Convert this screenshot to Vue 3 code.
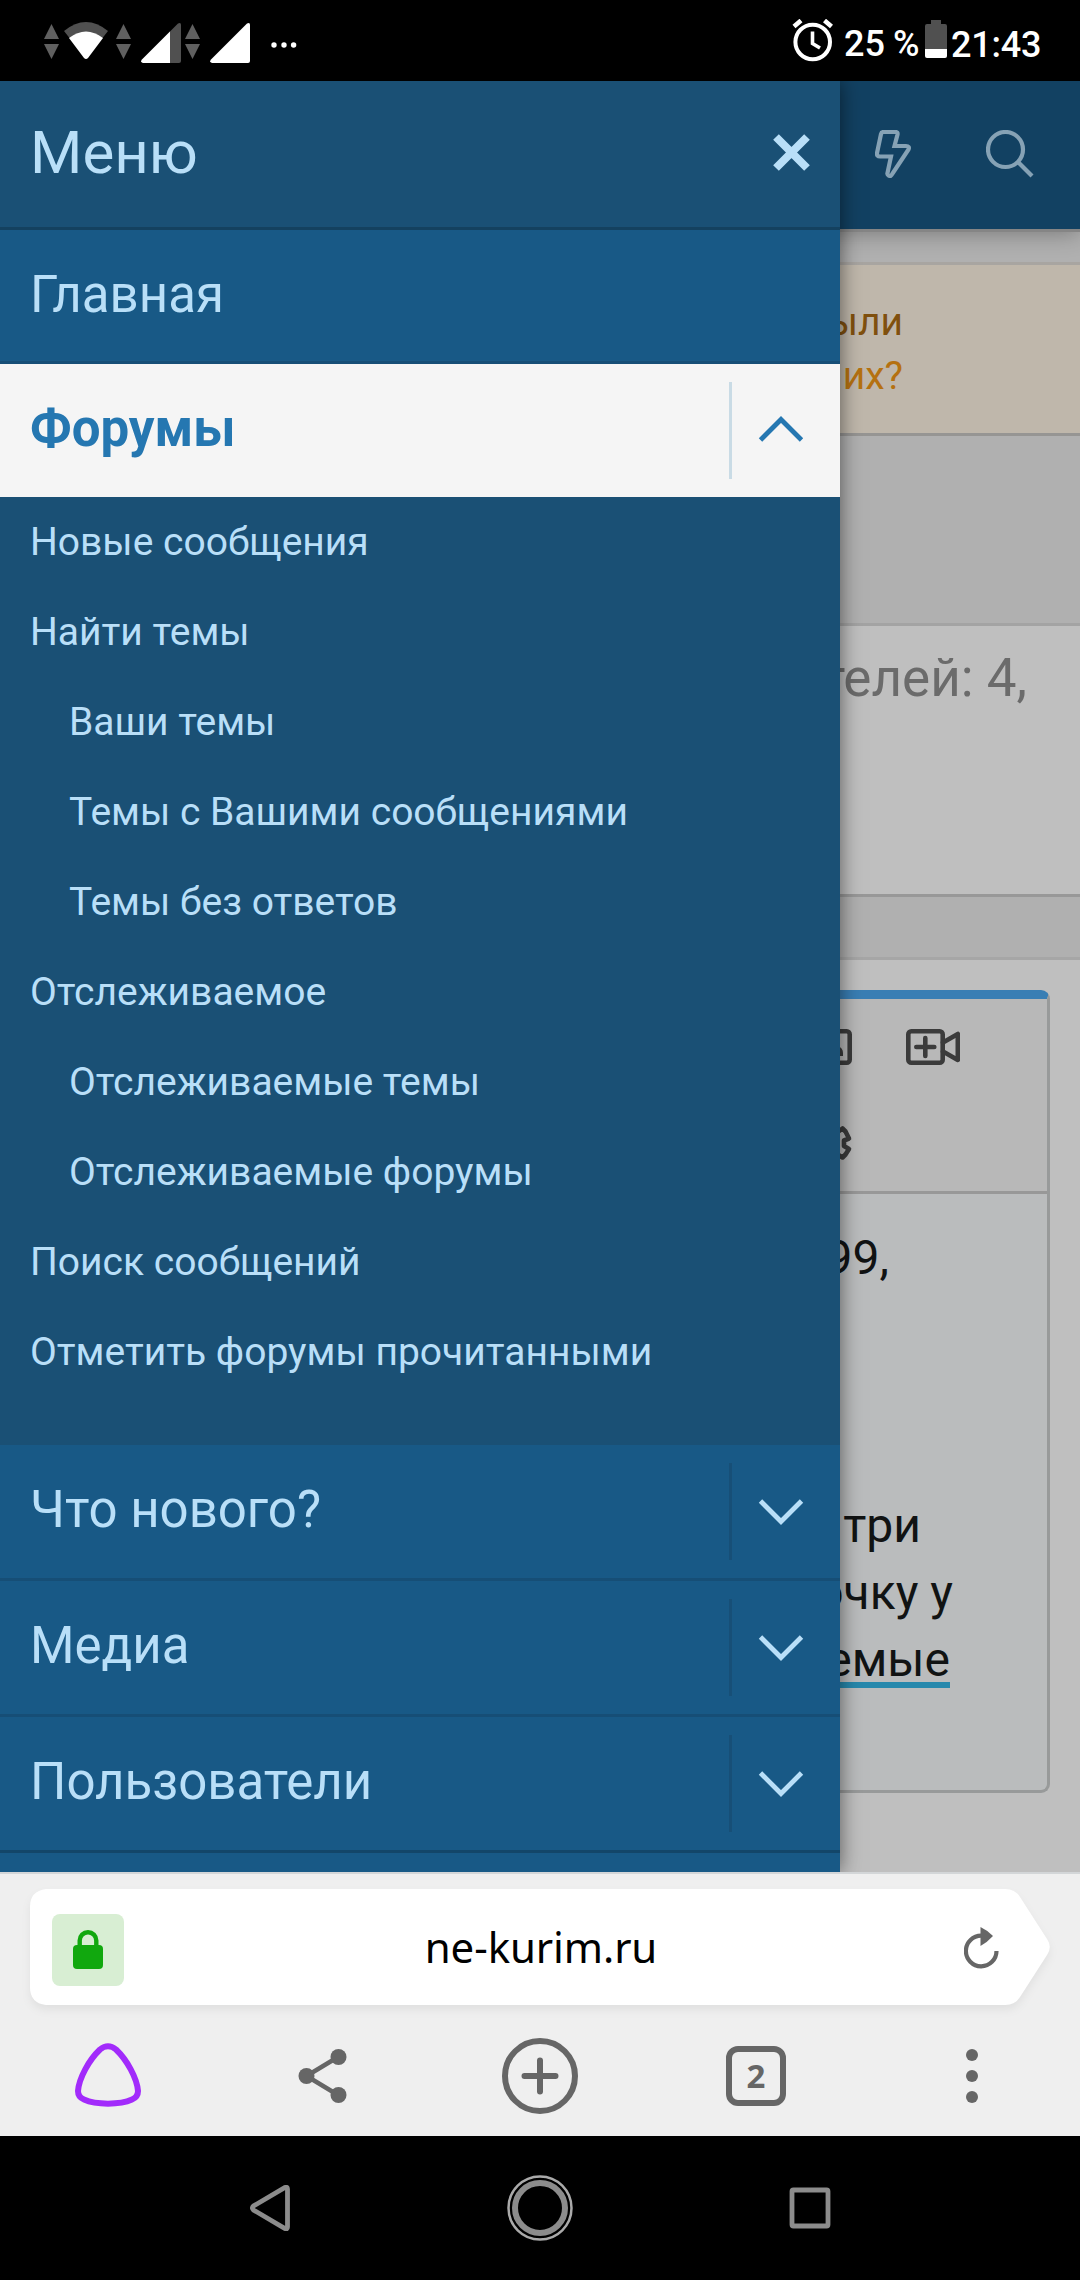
<template>
  <div class="screen">
    <header class="status">
      <div class="status-left">
        <svg class="updown" viewBox="0 0 15 35"><path d="M7.5 0L15 15H0zM0 20H15L7.5 35z" /></svg>
        <svg class="wifi" viewBox="0 0 44 37">
          <path d="M0 9Q22 -9 44 9L22 37z" fill="#505050" />
          <path d="M5 16Q22 3 39 16L24 36Q22 38 20 36z" fill="#fff" />
        </svg>
        <svg class="updown second" viewBox="0 0 15 35"><path d="M7.5 0L15 15H0zM0 20H15L7.5 35z" /></svg>
        <svg class="signal" viewBox="0 0 40 40">
          <path d="M37 .6Q40-1 40 2V38Q40 40 38 40H2Q-1 39 1 36.500z" fill="#505050" />
          <path d="M29 8.600V40H2Q-1 39 1 36.500z" fill="#fff" />
        </svg>
        <svg class="updown third" viewBox="0 0 15 35"><path d="M7.5 0L15 15H0zM0 20H15L7.5 35z" /></svg>
        <svg class="signal" viewBox="0 0 40 40"><path d="M37 .6Q40-1 40 2V38Q40 40 38 40H2Q-1 39 1 36.500z" fill="#fff" /></svg>
        <svg class="more" viewBox="0 0 26 6" fill="#fff"><circle cx="3" cy="3" r="2.700" /><circle cx="13" cy="3" r="2.700" /><circle cx="22.600" cy="3" r="2.700" /></svg>
      </div>
      <div class="status-right">
        <svg class="alarm" viewBox="0 0 42 43" fill="none" stroke="#fff">
          <circle cx="20.700" cy="23" r="17.300" stroke-width="4" />
          <path d="M20.500 12.500V24.500L28 29" stroke-width="3.600" />
          <path d="M2 7.500L9 1.500M39.500 7.500L32.500 1.500" stroke-width="4.600" />
        </svg>
        <span class="percent">25 <i>%</i></span>
        <svg class="battery" viewBox="0 0 22 38">
          <path d="M6 0H16V4H20Q22 4 22 6V29H0V6Q0 4 2 4H6z" fill="#505050" />
          <path d="M0 29H22V36Q22 38 20 38H2Q0 38 0 36z" fill="#fff" />
        </svg>
        <span class="time">21:43</span>
      </div>
    </header>

    <main class="view">
      <div class="page">
        <div class="page-nav">
          <svg class="bolt" viewBox="0 0 36 48"><path d="M8.500 2H20.500Q23 2 22.500 4.500L19.500 16H31Q35 16 33.500 19.500L17.500 43.500Q16 47 13.500 45.500Q12 44.500 12.500 43L16 26.500H5Q1.500 26.500 2 23L6 4Q6.500 2 8.500 2z" /></svg>
          <svg class="search" viewBox="0 0 48 48"><circle cx="19.500" cy="19.500" r="17.500" /><path d="M32 32L46 46" /></svg>
        </div>
        <div class="notice">
          <p>ыли</p>
          <p class="notice-link">их?</p>
        </div>
        <div class="visitors">телей: 4,</div>
        <div class="reply">
          <div class="editor">
            <div class="editor-tools">
              <div class="tool-row">
                <svg class="tool-image" viewBox="0 0 48 36"><rect x="2.300" y="2.300" width="43.400" height="31.400" rx="3" /><path d="M8 25L17 15L23 21L34 17Q39 19 39 24V27H8z" fill="#3b3b3b" stroke="none" /></svg>
                <svg class="tool-video" viewBox="0 0 54 36"><rect x="2.300" y="2.300" width="34.400" height="31.400" rx="3" /><path d="M19.300 9V27M10.300 18H28.300M37 13.500L51.800 5V31L37 22.500" /></svg>
              </div>
              <div class="tool-row second-row">
                <svg class="tool-gear" viewBox="0 0 34 34"><path d="M9 2.500L12.500 5.500Q17 3.500 21.500 5.500L25.500 2.500L28.500 5.500L32 12.500L27 14.500V20L32 23L28.500 28.500L25.500 31.500L21.500 29Q17 31 12.500 29L9 31.500L2 23L7 20V14.500L2 12z" /></svg>
              </div>
            </div>
            <div class="editor-body">
              <p class="first">99,</p>
              <p class="line-a">три</p>
              <p class="line-b">очку у</p>
              <p class="line-c"><span class="spell">емые</span></p>
            </div>
          </div>
        </div>
      </div>

      <nav class="drawer">
        <div class="drawer-head">
          <span>Меню</span>
          <svg class="close" viewBox="0 0 39 39"><path d="M4 4L35 35M35 4L4 35" /></svg>
        </div>
        <template v-for="item in menu" :key="item.title">
          <div class="item" :class="{ active: item.open }">
            <a>{{ item.title }}</a>
            <button v-if="item.toggle" class="toggle" @click="item.open = !item.open">
              <svg viewBox="0 0 46 27" :class="{ up: item.open }"><path d="M2.500 3L23 23.500L43.500 3" /></svg>
            </button>
          </div>
          <ul v-if="item.open" class="sub">
            <li v-for="link in item.links" :key="link.text" :class="{ child: link.child }">{{ link.text }}</li>
          </ul>
        </template>
      </nav>
    </main>

    <footer class="browser">
      <div class="address">
        <svg class="address-shape" viewBox="0 0 1020 116"><path d="M16 0H975Q985 0 990 8L1017 50Q1022.500 58 1017 66L990 108Q985 116 975 116H16Q0 114 0 98V18Q0 2 16 0z" fill="#fff" /></svg>
        <div class="lock">
          <svg viewBox="0 0 30 39"><rect y="15" width="30" height="24" rx="4" fill="#11a80e" /><path d="M6.700 17V10.500A8.300 8.300 0 0 1 23.300 10.500V17" fill="none" stroke="#11a80e" stroke-width="4.400" /></svg>
        </div>
        <span class="url">ne-kurim.ru</span>
        <svg class="reload" viewBox="0 0 36 42"><path d="M32.500 24A15.300 15.300 0 1 1 17.500 8.700" fill="none" stroke="#666" stroke-width="4.200" /><path d="M16.500 0Q23 3 29 9Q23 15.500 16.500 19z" fill="#666" /></svg>
      </div>
      <div class="tabs">
        <svg class="alice" viewBox="0 0 66 64"><path d="M25 6.500Q33 0 41 6.500C52 17 62 35 63 48Q63 54 57 56.500C45 62 21 62 9 56.500Q3 54 3 48C4 35 14 17 25 6.500z" /></svg>
        <svg class="share" viewBox="0 0 49 54"><path d="M40 8L8.500 27L40 46" fill="none" stroke="#666" stroke-width="4.500" /><circle cx="8.500" cy="27" r="8" /><circle cx="40.500" cy="8" r="8" /><circle cx="40.500" cy="46" r="8" /></svg>
        <svg class="plus" viewBox="0 0 76 76"><circle cx="38" cy="38" r="35" /><path d="M38 22.500V53.500M22.500 38H53.500" /></svg>
        <div class="count">2</div>
        <svg class="dots" viewBox="0 0 12 54"><circle cx="6" cy="6" r="6" /><circle cx="6" cy="27" r="6" /><circle cx="6" cy="48" r="6" /></svg>
      </div>
    </footer>

    <div class="android">
      <svg class="back" viewBox="0 0 40 46"><path d="M35 2.500Q37.500 1.500 37.500 4V42Q37.500 44.500 35 43.500L3.500 25Q1.500 23 3.500 21z" /></svg>
      <svg class="home" viewBox="0 0 66 66"><circle cx="33" cy="33" r="31.500" stroke-width="2.500" stroke="#aaa" /><circle cx="33" cy="33" r="25" stroke-width="6" /></svg>
      <svg class="recent" viewBox="0 0 42 42"><rect x="3" y="3" width="36" height="36" rx="1.500" /></svg>
    </div>
  </div>
</template>

<script setup>
import { reactive } from "vue";

const menu = reactive([
  { title: "Главная", toggle: false, open: false },
  {
    title: "Форумы", toggle: true, open: true,
    links: [
      { text: "Новые сообщения" },
      { text: "Найти темы" },
      { text: "Ваши темы", child: true },
      { text: "Темы с Вашими сообщениями", child: true },
      { text: "Темы без ответов", child: true },
      { text: "Отслеживаемое" },
      { text: "Отслеживаемые темы", child: true },
      { text: "Отслеживаемые форумы", child: true },
      { text: "Поиск сообщений" },
      { text: "Отметить форумы прочитанными" }
    ]
  },
  { title: "Что нового?", toggle: true, open: false },
  { title: "Медиа", toggle: true, open: false },
  { title: "Пользователи", toggle: true, open: false }
]);
</script>

<style>
body { margin: 0; background: #000; }
</style>

<style scoped>
* { box-sizing: border-box; }
svg { display: block; flex: none; }
p, ul { margin: 0; padding: 0; list-style: none; }

.screen { width: 1080px; height: 2280px; overflow: hidden; background: #000; font-family: Roboto, sans-serif; }

/* android status bar */
.status { height: 81px; display: flex; justify-content: space-between; color: #fff; }
.status-left { display: flex; align-items: flex-start; padding: 23px 0 0 44px; }
.updown { width: 15px; height: 35px; margin-top: 1px; fill: #606060; }
.updown.second { margin-left: 8px; }
.updown.third { margin: 1px 10px 0 4px; }
.wifi { width: 44px; height: 37px; margin: -1px 0 0 5px; }
.signal { width: 40px; height: 40px; }
.second + .signal { margin-left: 10px; }
.more { width: 26px; height: 6px; margin: 19px 0 0 21px; }
.status-right { display: flex; align-items: flex-start; padding-right: 39px; font-size: 36px; font-weight: 500; line-height: 42px; }
.alarm { width: 42px; height: 43px; margin: 19px 10px 0 0; }
.percent { margin-top: 23px; width: 81px; white-space: nowrap; }
.percent i { font-style: normal; margin-left: -1px; letter-spacing: -1px; }
.battery { width: 22px; height: 38px; margin: 20px 4px 0 0; }
.time { margin-top: 24px; width: 90px; letter-spacing: -0.2px; }

.view { position: relative; height: 1791px; overflow: hidden; }

/* dimmed forum page */
.page { height: 1791px; background: #b0b0b0; }
.page-nav {
  position: relative; height: 148px; padding: 0 46px 3px 0; background: #124162;
  display: flex; align-items: center; justify-content: flex-end; gap: 75px;
  box-shadow: 0 3px 0 #858585, 0 4px 22px rgba(0,0,0,0.32);
}
.bolt, .search { fill: none; stroke: #86a2b5; stroke-width: 4.2; }
.bolt { width: 36px; height: 48px; }
.search { width: 48px; height: 48px; }
.notice {
  height: 174px; margin-top: 33px; padding: 30px 177px 0 0; text-align: right;
  background: #bfb7ab; border-top: 3px solid #a8a5a1; border-bottom: 3px solid #969593;
  font-size: 39px; line-height: 54px; color: #80500e;
}
.notice .notice-link { color: #b57110; }
.visitors {
  height: 274px; margin-top: 187px; padding: 23px 53px 0 0; text-align: right; font-size: 53px; line-height: 58px;
  color: #6b6b6b; background: #bfbfbf; border-top: 3px solid #a3a3a3; border-bottom: 3px solid #989898;
}
.reply { height: 915px; margin-top: 60px; padding: 30px 30px 0; background: #bfbfbf; border-top: 3px solid #a6a6a6; }
.editor {
  height: 803px; overflow: hidden; border: 3px solid #989a9a; border-top: 9px solid #397eb4;
  border-radius: 9px; background: #babcbd;
}
.editor-tools { height: 195px; padding: 30px 87px 0 0; background: #b8b8b8; border-bottom: 3px solid #989898; }
.editor-tools svg { fill: none; stroke: #3b3b3b; stroke-width: 4.6; stroke-linejoin: round; stroke-linecap: round; }
.tool-row { display: flex; justify-content: flex-end; gap: 54px; }
.second-row { padding: 61px 109px 0 0; }
.tool-image { width: 48px; height: 36px; }
.tool-video { width: 54px; height: 36px; }
.tool-gear { width: 34px; height: 34px; overflow: visible; }
.editor-body { padding-top: 30px; text-align: right; font-size: 48px; line-height: 67px; color: #111313; }
.first { padding-right: 158px; }
.editor-body .line-a { margin-top: 201px; padding-right: 126px; }
.line-b { padding-right: 94px; }
.line-c { padding-right: 97px; }
.spell { background: linear-gradient(#2688ac, #2688ac) 0 56px / 100% 6px no-repeat; display: inline-block; line-height: 67px; }

/* side menu over the page */
.drawer {
  position: absolute; top: 0; left: 0; width: 840px; height: 1791px; overflow: hidden;
  background: #185986; color: #b9dff8; box-shadow: 0 0 20px rgba(0,0,0,0.55);
}
.drawer-head {
  height: 149px; padding: 0 29px 4px 30px; background: #1a5075; border-bottom: 3px solid #14415f;
  display: flex; align-items: center; justify-content: space-between; font-size: 60px;
}
.close { width: 39px; height: 39px; fill: none; stroke: #b9dff8; stroke-width: 8; }
.item {
  height: 136px; padding-left: 30px; border-bottom: 3px solid #164e76; font-size: 51px;
  display: flex; align-items: center; justify-content: space-between;
}
.item:nth-child(2) { height: 134px; }
.item a { padding-bottom: 5px; }
.item:nth-child(2) a { padding-bottom: 3px; }
.item:last-child { border-color: #134669; }
.item.active { height: 133px; border: 0; background: #f5f5f5; color: #2577b1; font-weight: 700; }
.toggle {
  width: 111px; height: 97px; padding: 0 0 1px 26px; border: 0; border-left: 3px solid #174f77;
  background: none; display: flex; align-items: center;
}
.active .toggle { border-color: #c9dbe5; padding-bottom: 3px; }
.toggle svg { width: 46px; height: 27px; fill: none; stroke: #b9dff8; stroke-width: 4.8; }
.active .toggle svg { stroke: #2577b1; }
.toggle .up { transform: rotate(180deg); }
.sub { height: 948px; background: #1a5075; font-size: 39px; line-height: 90px; }
.sub li { padding-left: 30px; white-space: nowrap; }
.sub li.child { padding-left: 69px; }

/* browser toolbar */
.browser { height: 264px; padding: 15px 30px 0; background: #efefef; border-top: 2px solid #d3d6d8; }
.address { position: relative; height: 116px; padding: 0 50px 0 22px; display: flex; align-items: center; justify-content: space-between; }
.address-shape { position: absolute; top: 0; left: 0; width: 1020px; height: 116px; overflow: visible; filter: drop-shadow(0 5px 4px rgba(0,0,0,0.06)); }
.lock, .url, .reload { position: relative; }
.lock { width: 72px; height: 72px; margin-top: 5px; border-radius: 8px; background: #d8eed3; display: flex; align-items: center; justify-content: center; }
.lock svg { width: 30px; height: 39px; }
.url { font-family: "Noto Sans", sans-serif; font-size: 42px; line-height: 58px; color: #000; margin-left: -6px; letter-spacing: -0.1px; }
.reload { width: 36px; height: 42px; margin-top: 2px; }
.tabs { height: 131px; margin: 0 -30px; padding-top: 11px; display: grid; grid-template-columns: repeat(5, 1fr); align-items: center; justify-items: center; }
.alice { width: 66px; height: 64px; margin-top: -3px; fill: none; stroke: #a22bfb; stroke-width: 6; }
.share { width: 49px; height: 54px; margin-left: -4px; fill: #666; }
.plus { width: 76px; height: 76px; fill: none; stroke: #666; stroke-width: 6; stroke-linecap: round; }
.count {
  width: 60px; height: 60px; border: 6px solid #666; border-radius: 12px; color: #666;
  font: 700 33px/48px "Noto Sans", sans-serif; text-align: center;
}
.dots { width: 12px; height: 54px; fill: #666; }

/* android navigation */
.android { height: 144px; padding: 0 135px; display: grid; grid-template-columns: repeat(3, 1fr); align-items: center; justify-items: center; }
.android svg { fill: none; stroke: #8c8c8c; stroke-width: 4.800; }
.back { width: 40px; height: 46px; }
.home { width: 66px; height: 66px; }
.recent { width: 42px; height: 42px; }
</style>
